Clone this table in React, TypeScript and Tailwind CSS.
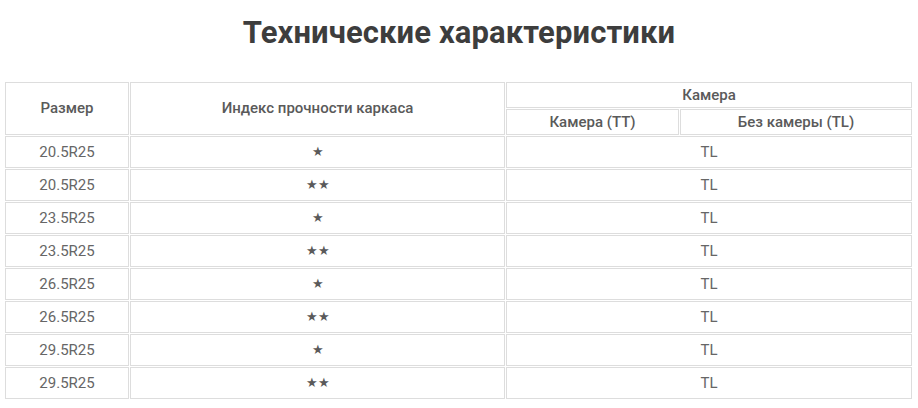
import React from "react";

const rows: [string, string][] = [
  ["20.5R25", "★"],
  ["20.5R25", "★★"],
  ["23.5R25", "★"],
  ["23.5R25", "★★"],
  ["26.5R25", "★"],
  ["26.5R25", "★★"],
  ["29.5R25", "★"],
  ["29.5R25", "★★"],
];

export default function App() {
  return (
    <div className="w-[918px] h-[408px] bg-white overflow-hidden" style={{ fontFamily: "Roboto, 'Liberation Sans', sans-serif" }}>
      <h2 className="h-[66px] pt-[14px] text-center text-[31px] leading-[37px] font-bold tracking-[0.1px] text-[#3d3d3d]">
        Технические характеристики
      </h2>
      <div className="px-[4px] pt-[15px]">
        <table className="w-[909px] border-separate border-spacing-[1px] table-fixed">
          <colgroup>
            <col className="w-[124px]" />
            <col className="w-[375px]" />
            <col className="w-[173px]" />
            <col className="w-[232px]" />
          </colgroup>
          <thead>
            <tr>
              <th rowSpan={2} className="border border-[#dddddd] text-[15px] font-medium text-[#5a5a5a] text-center align-middle p-0">
                Размер
              </th>
              <th rowSpan={2} className="border border-[#dddddd] text-[15px] font-medium text-[#5a5a5a] text-center align-middle p-0">
                Индекс прочности каркаса
              </th>
              <th colSpan={2} className="h-[26px] border border-[#dddddd] text-[15px] font-medium text-[#5a5a5a] text-center align-middle p-0">
                Камера
              </th>
            </tr>
            <tr>
              <th className="h-[26px] border border-[#dddddd] text-[15px] font-medium text-[#5a5a5a] text-center align-middle p-0">
                Камера (TT)
              </th>
              <th className="h-[26px] border border-[#dddddd] text-[15px] font-medium text-[#5a5a5a] text-center align-middle p-0">
                Без камеры (TL)
              </th>
            </tr>
          </thead>
          <tbody>
            {rows.map(([size, stars], i) => (
              <tr key={i}>
                <td className="h-[32px] border border-[#dddddd] text-[15px] text-[#666666] text-center align-middle p-0">
                  {size}
                </td>
                <td className="h-[32px] border border-[#dddddd] text-[13px] text-[#5a5a5a] text-center align-middle p-0">
                  {stars}
                </td>
                <td colSpan={2} className="h-[32px] border border-[#dddddd] text-[15px] text-[#666666] text-center align-middle p-0">
                  TL
                </td>
              </tr>
            ))}
          </tbody>
        </table>
      </div>
    </div>
  );
}
